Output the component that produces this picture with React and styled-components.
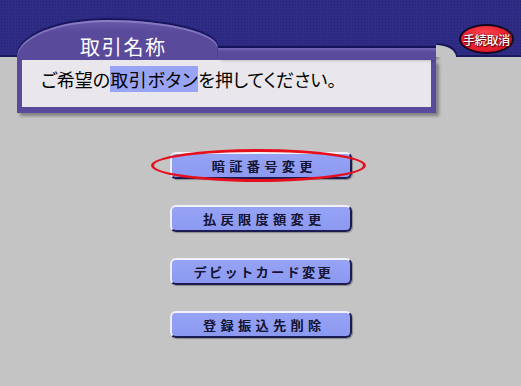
import React from 'react';
import styled, { createGlobalStyle } from 'styled-components';

const GlobalStyle = createGlobalStyle`
    html, body {
        margin: 0;
        padding: 0;
        background: #c4c4c4;
    }
    body {
        font-family: "Noto Sans CJK JP", "Noto Sans", sans-serif;
    }
`;

const Screen = styled.div`
    position: relative;
    width: 521px;
    height: 386px;
    background: #c4c4c4;
    display: flex;
    flex-direction: column;
    overflow: hidden;
`;

const Header = styled.header`
    box-sizing: border-box;
    height: 57px;
    display: flex;
    justify-content: flex-end;
    align-items: flex-start;
    padding: 24px 7px 0 0;
    background-color: #2f2c86;
    background-image: radial-gradient(rgba(15, 12, 70, 0.3) 0.5px, transparent 1px);
    background-size: 3px 3px;
    border-bottom: 2px solid #1b1960;
`;

const CancelButton = styled.button`
    box-sizing: border-box;
    width: 55px;
    height: 30px;
    padding: 0;
    border: 2px solid #14081c;
    border-radius: 50%;
    background: radial-gradient(ellipse at 45% 35%, #ff4a55 0%, #ea2030 55%, #c8101e 100%);
    color: #fff;
    font-family: "Noto Sans CJK JP", sans-serif;
    font-size: 12px;
    font-weight: 500;
    letter-spacing: -0.3px;
    white-space: nowrap;
    text-shadow: 0 0 2px #5a0008, 1px 1px 1px #5a0008;
    display: flex;
    align-items: center;
    justify-content: center;
    overflow: visible;
`;

const Prompt = styled.section`
    position: relative;
    width: 419px;
    margin: -37px 0 0 17px;

    &::after {
        content: '';
        position: absolute;
        left: 100%;
        top: 25px;
        width: 20px;
        height: 12px;
        background: #c4c4c4;
        border-top-right-radius: 100% 100%;
        box-shadow: 1px -2px 0 #18165a;
    }
`;

const PromptTop = styled.div`
    display: flex;
    align-items: flex-end;
`;

const TitleTab = styled.div`
    box-sizing: border-box;
    width: 201px;
    height: 40px;
    padding: 0 0 3px 63px;
    display: flex;
    align-items: flex-end;
    background: linear-gradient(#6a5bab, #5a4a9c 30%);
    border-radius: 45% 55% 0 0 / 37px 28px 0 0;
    box-shadow: 0 -2px 1px #17155a, inset 0 2px 0 rgba(200, 190, 240, 0.35);
    color: #fff;
    font-size: 20px;
    line-height: 20px;
    letter-spacing: 1.7px;
`;

const TopStrip = styled.div`
    flex: 1;
    height: 12px;
    background: linear-gradient(#7467b4, #5a4a9c 35%);
    box-shadow: 0 -2px 1px #17155a, 3px 0 3px rgba(0, 0, 0, 0.3);
`;

const MessageBox = styled.div`
    box-sizing: border-box;
    height: 53px;
    padding: 9px 0 0 19px;
    background: #e9e7eb;
    border: solid #5a4a9c;
    border-width: 0 5px 6px 5px;
    box-shadow: 3px 3px 3px rgba(0, 0, 0, 0.35);
    color: #000;
    font-size: 18px;
    line-height: 20px;
    font-feature-settings: "palt";
    white-space: nowrap;
`;

const Highlight = styled.span`
    background: #9aa4f4;
    letter-spacing: 0.6px;
`;

const ButtonList = styled.nav`
    display: flex;
    flex-direction: column;
    align-items: center;
    gap: 26px;
    margin-top: 39px;
`;

const MenuButton = styled.button`
    position: relative;
    box-sizing: border-box;
    width: 182px;
    height: 27px;
    padding: 0 0 0 ${p => p.$spacing + 3}px;
    border: 2px solid;
    border-color: #f2f2ff #1c1c52 #1c1c52 #eceeff;
    border-radius: 6px;
    background: linear-gradient(#96a3f5, #8b99f1);
    box-shadow: 1px 1px 1px rgba(0, 0, 0, 0.3);
    color: #161634;
    font-family: "Noto Sans CJK JP", sans-serif;
    font-size: 13px;
    font-weight: 500;
    letter-spacing: ${p => p.$spacing}px;
    text-shadow: 0.3px 0 0 #161634;
    white-space: nowrap;

    ${p => p.$circled && `
        &::after {
            content: '';
            position: absolute;
            left: -21px;
            top: -5px;
            width: 215px;
            height: 33px;
            box-sizing: border-box;
            border: 3px solid #e6101c;
            border-radius: 50%;
            pointer-events: none;
        }
    `}
`;

const menuItems = [
    { label: '暗証番号変更', spacing: 4.5, circled: true },
    { label: '払戻限度額変更', spacing: 4.5 },
    { label: 'デビットカード変更', spacing: 2.5 },
    { label: '登録振込先削除', spacing: 4.5 },
];

export default function App() {
    return (
        <Screen>
            <GlobalStyle />
            <Header>
                <CancelButton>手続取消</CancelButton>
            </Header>
            <Prompt>
                <PromptTop>
                    <TitleTab>取引名称</TitleTab>
                    <TopStrip />
                </PromptTop>
                <MessageBox>
                    ご希望の<Highlight>取引ボタン</Highlight>を押してください。
                </MessageBox>
            </Prompt>
            <ButtonList>
                {menuItems.map(item => (
                    <MenuButton key={item.label} $spacing={item.spacing} $circled={item.circled}>
                        {item.label}
                    </MenuButton>
                ))}
            </ButtonList>
        </Screen>
    );
}
